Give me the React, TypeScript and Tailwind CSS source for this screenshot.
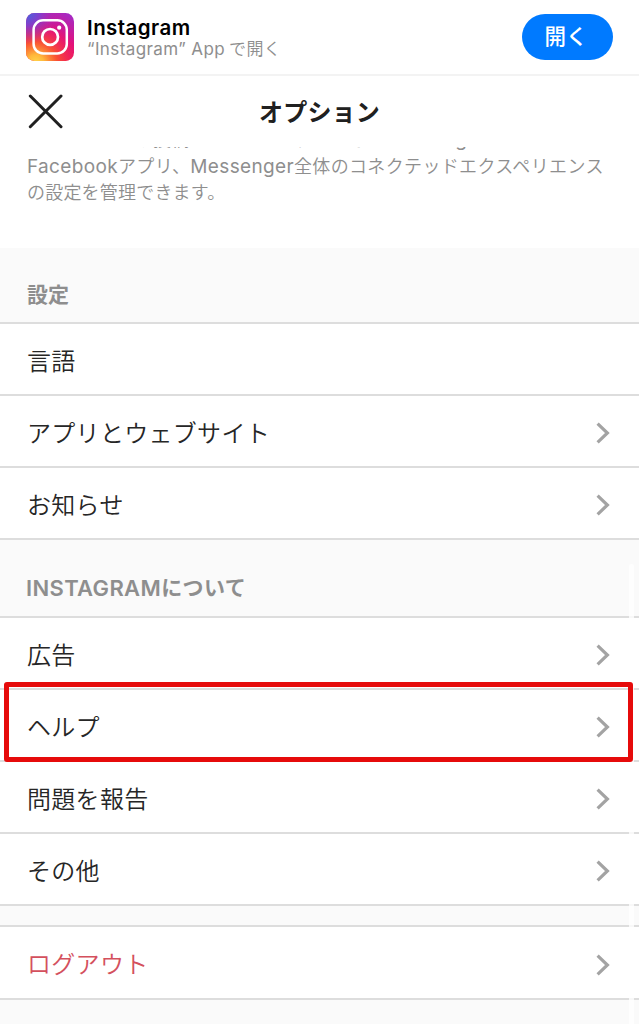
import React from 'react';

function Chevron() {
  return (
    <svg className="h-[22px] w-[14px] shrink-0" viewBox="0 0 14 22" fill="none" stroke="#a3a3a3" strokeWidth="3.2">
      <path d="M1.6 1.6 L11.4 11 L1.6 20.4" />
    </svg>
  );
}

type RowProps = { label: string; height: string; arrow?: boolean; color?: string };

function Row({ label, height, arrow = true, color = 'text-[#262626]' }: RowProps) {
  return (
    <li className={`${height} flex items-center justify-between border-b-2 border-[#dddddd] bg-white pt-[4px] pr-[29px] pl-[27px]`}>
      <span className={`pt-px text-[24px] leading-[36px] font-[350] tracking-[0.3px] ${color}`}>{label}</span>
      {arrow && <Chevron />}
    </li>
  );
}

function InstagramLogo() {
  return (
    <svg className="h-12 w-12 shrink-0" viewBox="0 0 48 48">
      <defs>
        <linearGradient id="base" x1="0.85" y1="0" x2="0.3" y2="1">
          <stop offset="0" stopColor="#a52bc4" />
          <stop offset="0.45" stopColor="#e2107c" />
          <stop offset="1" stopColor="#f8283d" />
        </linearGradient>
        <radialGradient id="warm" cx="0.2" cy="1.05" r="0.9">
          <stop offset="0" stopColor="#ffd84d" />
          <stop offset="0.2" stopColor="#ffb83b" />
          <stop offset="0.5" stopColor="#fb5a2e" stopOpacity="0.85" />
          <stop offset="1" stopColor="#f3195f" stopOpacity="0" />
        </radialGradient>
        <radialGradient id="cool" cx="0.02" cy="0" r="0.65">
          <stop offset="0" stopColor="#4168df" />
          <stop offset="0.4" stopColor="#7545d8" stopOpacity="0.85" />
          <stop offset="1" stopColor="#a02cc2" stopOpacity="0" />
        </radialGradient>
      </defs>
      <rect width="48" height="48" rx="8.5" fill="url(#base)" />
      <rect width="48" height="48" rx="8.5" fill="url(#warm)" />
      <rect width="48" height="48" rx="8.5" fill="url(#cool)" />
      <rect x="7.6" y="7.3" width="33.2" height="33.2" rx="9.5" fill="none" stroke="white" strokeWidth="2.5" />
      <circle cx="24.1" cy="23.9" r="7.9" fill="none" stroke="white" strokeWidth="2.7" />
      <circle cx="33.2" cy="14.7" r="2.1" fill="white" />
    </svg>
  );
}

export default function App() {
  return (
    <div lang="ja" className="relative flex h-[1024px] w-[639px] flex-col overflow-hidden bg-[#fafafa] font-['Inter','Noto_Sans_CJK_JP',sans-serif]">
      <header className="flex h-[76px] shrink-0 items-center border-b-2 border-[#f3f3f3] bg-white pr-[26px] pl-[26px]">
        <InstagramLogo />
        <div className="ml-[13px] flex flex-col pt-[2px]">
          <span className="text-[20.5px] leading-[22px] font-semibold tracking-[0.45px] text-black">Instagram</span>
          <span className="text-[17px] leading-[21px] tracking-[0.4px] whitespace-nowrap text-[#8e8e8e]">
            “Instagram” App<span className="ml-[4px] font-[350]">で開く</span>
          </span>
        </div>
        <button className="ml-auto flex h-[46px] w-[91px] items-center justify-center rounded-full bg-[#007aff] pr-[3px] text-[21.5px] leading-none font-medium text-white">
          開く
        </button>
      </header>

      <div className="grid h-[71px] shrink-0 grid-cols-[100px_1fr_100px] items-center bg-white">
        <svg className="ml-[28px] h-[35px] w-[35px]" viewBox="0 0 35 35" fill="none" stroke="#202020" strokeWidth="3" strokeLinecap="round">
          <path d="M2.3 2 L33 32.7 M33 2 L2.3 32.7" />
        </svg>
        <h1 className="pt-[2px] text-center text-[24px] leading-[36px] font-bold tracking-[0.2px] text-[#202020]">オプション</h1>
      </div>

      <section className="flex h-[101px] shrink-0 flex-col overflow-hidden bg-white pl-[27px] text-[18px] leading-[26px] font-[350] whitespace-nowrap text-[#8e8e8e]">
        <p className="-mt-[20px] mb-px tracking-[0.1px]">ストーリーズや投稿のシェア、ログインなど、<span className="ml-[8px] text-[19px] font-normal">Instagram</span>、</p>
        <p className="tracking-[0.35px]"><span className="text-[19px] font-normal">Facebook</span>アプリ、<span className="text-[19px] font-normal">Messenger</span>全体のコネクテッドエクスペリエンス</p>
        <p className="tracking-[0.2px]">の設定を管理できます。</p>
      </section>

      <main className="flex flex-col">
        <h2 className="flex h-[76px] items-center border-b-2 border-[#dddddd] pt-[20px] pl-[27px] text-[21px] leading-[30px] font-bold text-[#8e8e8e]">設定</h2>
        <ul>
          <Row label="言語" height="h-[72px]" arrow={false} />
          <Row label="アプリとウェブサイト" height="h-[72px]" />
          <Row label="お知らせ" height="h-[72px]" />
        </ul>
        <h2 className="flex h-[78px] items-center border-b-2 border-[#dddddd] pt-[20px] pl-[26px] text-[21px] leading-[30px] font-semibold text-[#8e8e8e]">
          <span className="text-[22px] tracking-[0.35px]">INSTAGRAM</span>
          <span className="tracking-[0.4px]">について</span>
        </h2>
        <ul>
          <Row label="広告" height="h-[72px]" />
          <Row label="ヘルプ" height="h-[72px]" />
          <Row label="問題を報告" height="h-[72px]" />
          <Row label="その他" height="h-[72px]" />
        </ul>
        <ul className="mt-[19px] border-t-2 border-[#dddddd]">
          <Row label="ログアウト" height="h-[73px]" color="text-[#d4505d]" />
        </ul>
      </main>

      <div className="absolute top-[564px] left-[629px] h-[460px] w-[5px] rounded-t-full bg-white/80" />
      <div className="absolute top-[682px] left-[4px] h-[80px] w-[629px] rounded-[3px] border-5 border-[#e60b0b]" />
    </div>
  );
}
